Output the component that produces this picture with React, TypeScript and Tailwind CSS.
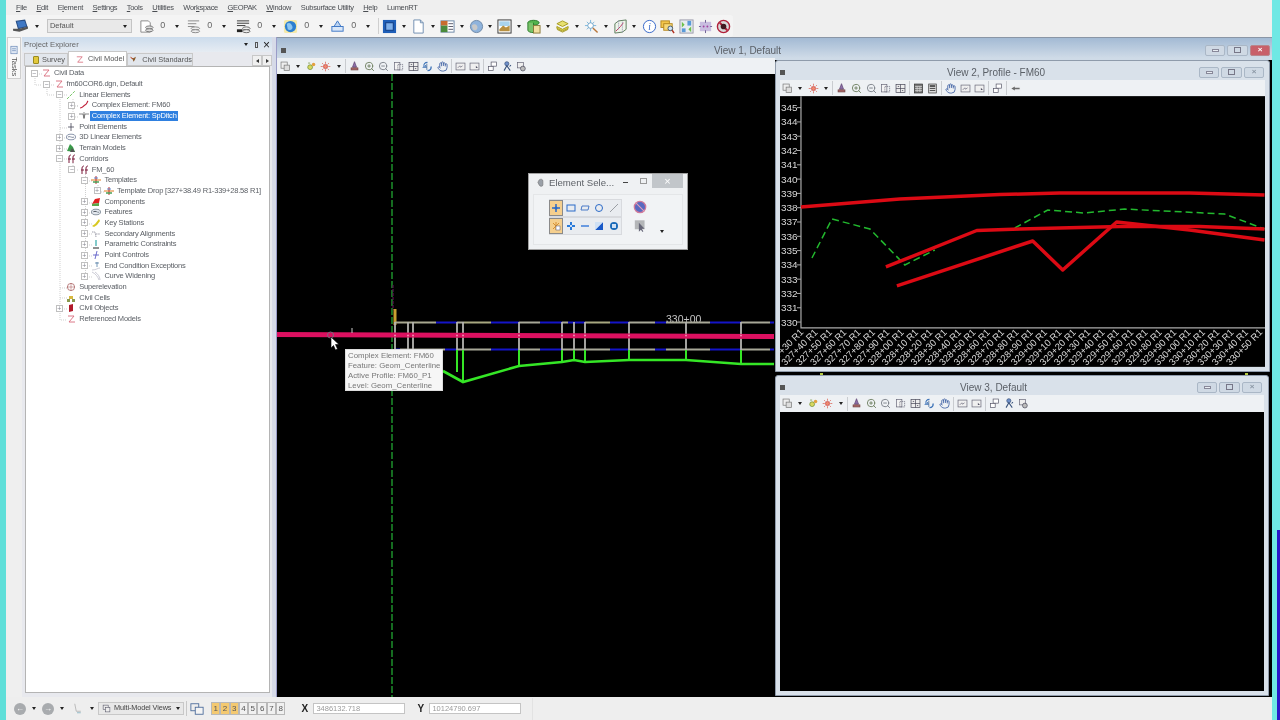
import React from "react";
import { Hand, ZoomIn, ZoomOut } from "lucide-react";

const Caret = () => (
  <span className="block w-0 h-0 border-x-[2.5px] border-x-transparent border-t-[3px] border-t-[#222]" />
);

/* ---------- toolbar icons ---------- */
const S = ({ children, c = "w-[14px] h-[14px]" }: { children: React.ReactNode; c?: string }) => (
  <svg viewBox="0 0 16 16" className={c} fill="none">{children}</svg>
);

const topIcons: Record<string, React.ReactNode> = {
  laptop: (<><path d="M4 3l8-1 2 6-8 2z" fill="#3f78c4" stroke="#2a4f86" /><path d="M1 10l6 0 8-2 0 2-8 3-6-1z" fill="#555" /></>),
  lvl1: (<><path d="M2 2h8l2 2v10H2z" fill="#fff" stroke="#888" /><ellipse cx="11" cy="9" rx="4" ry="1.6" fill="#ddd" stroke="#777" /><ellipse cx="11" cy="12" rx="4" ry="1.6" fill="#ddd" stroke="#777" /></>),
  lvl2: (<><path d="M2 2h12M2 5h9M2 8h7" stroke="#888" /><ellipse cx="10" cy="10" rx="4.5" ry="1.6" fill="#eee" stroke="#888" /><ellipse cx="10" cy="13" rx="4.5" ry="1.6" fill="#eee" stroke="#888" /></>),
  lvl3: (<><path d="M1 2h13M1 4.5h13M1 7h9" stroke="#333" /><rect x="1" y="11" width="6" height="3" fill="#222" /><ellipse cx="11" cy="10" rx="4" ry="1.6" fill="#eee" stroke="#666" /><ellipse cx="11" cy="13" rx="4" ry="1.6" fill="#eee" stroke="#666" /></>),
  globe: (<><rect x="1" y="1" width="14" height="14" rx="2" fill="#f5e9a8" /><circle cx="8" cy="8" r="6" fill="#2c7fd0" /><path d="M4 5c3-2 5 0 6 3s-3 5-5 3" fill="#8fc7ef" /></>),
  tri: (<><path d="M8 2l5 8H3z" fill="#bcd4f2" stroke="#3a74c4" /><rect x="2" y="8" width="12" height="5" fill="#d9e7f8" stroke="#3a74c4" /></>),
  cube: (<><rect x="1" y="1" width="14" height="14" fill="#1f5fb8" /><rect x="4" y="4" width="8" height="8" fill="#7fb0ea" stroke="#0e3a80" /></>),
  doc: (<><path d="M3 1h7l3 3v11H3z" fill="#fff" stroke="#6f8db0" /><path d="M10 1v3h3" stroke="#6f8db0" /></>),
  table: (<><rect x="1" y="2" width="14" height="12" fill="#fff" stroke="#6a86a6" /><rect x="1" y="2" width="7" height="5" fill="#c86b2e" /><rect x="1" y="7" width="7" height="7" fill="#4a8a3c" /><path d="M9 5h5M9 8h5M9 11h5" stroke="#556" /></>),
  earth: (<><circle cx="8" cy="8" r="6.5" fill="#8fb3dc" stroke="#6d87a6" /><path d="M3 7c3-3 6-1 6 2s-3 4-5 2" fill="#c8c8c8" /></>),
  photo: (<><rect x="1" y="1" width="14" height="14" fill="#fff" stroke="#333" /><rect x="2.5" y="2.5" width="11" height="5" fill="#a9d4ee" /><path d="M2.500 11l4-4 3 2 4-2v6h-11z" fill="#b89040" /></>),
  data: (<><ellipse cx="8" cy="4" rx="6" ry="2.600" fill="#53b34c" stroke="#2a7a2a" /><path d="M2 4v8c0 1.500 3 2.500 6 2.500V4" fill="#7ac36a" stroke="#2a7a2a" /><rect x="8" y="7" width="7" height="8" fill="#f2dfa0" stroke="#8a7a3a" /></>),
  stack: (<><path d="M2 5l6-3 6 3-6 3z" fill="#e7e070" stroke="#a59a20" /><path d="M2 8l6 3 6-3v2l-6 3-6-3z" fill="#dcd24c" stroke="#a59a20" /><path d="M2 11l6 3 6-3" stroke="#a59a20" /></>),
  spark: (<><path d="M7 1v12M1 7h12M3 3l8 8M11 3l-8 8" stroke="#7cb6dc" /><circle cx="7" cy="7" r="3" fill="#fff" stroke="#6ca2c8" /><path d="M9.500 9.500l5 5" stroke="#b8763a" strokeWidth="1.500" /></>),
  map: (<><path d="M2 5l4-3 8-1v10l-4 3-8 1z" fill="#eef4ea" stroke="#5a7a5a" /><path d="M3 13l5-5 3-4" stroke="#c03060" /><path d="M6 2v10M10 3v11" stroke="#88a" strokeDasharray="1 1" /></>),
  info: (<><circle cx="8" cy="8" r="6.500" fill="#fff" stroke="#2f62c6" /><text x="8" y="12" textAnchor="middle" fontSize="10" fontStyle="italic" fontFamily="Liberation Serif" fill="#2f62c6">i</text></>),
  find: (<><rect x="1" y="2" width="9" height="7" fill="#f3c64a" stroke="#b4861e" /><rect x="4" y="5" width="9" height="7" fill="#f6d877" stroke="#b4861e" /><circle cx="11" cy="10" r="2.500" fill="#cfe3f5" stroke="#456" /><path d="M13 12l2 3" stroke="#b03020" strokeWidth="1.500" /></>),
  sync: (<><rect x="1" y="1" width="14" height="14" fill="#e8ecf0" stroke="#99a" /><path d="M3 3l3 3-3 3zM13 8l-3 3 3 3z" fill="#6cc04a" /><rect x="9" y="2" width="4" height="5" fill="#5a9ad8" /><rect x="3" y="10" width="4" height="4" fill="#5a9ad8" /></>),
  plug: (<><rect x="2" y="3" width="12" height="10" fill="#c8bde0" /><circle cx="6" cy="8" r="1" fill="#a040a0" /><circle cx="10" cy="8" r="1" fill="#a040a0" /><path d="M8 1v3M8 12v3M1 8h2M13 8h2" stroke="#6a5a90" /></>),
  stop: (<><circle cx="8" cy="8" r="6.500" fill="#d9d9d9" stroke="#b0203a" strokeWidth="1.500" /><path d="M4 4l8 8" stroke="#b0203a" strokeWidth="2" /><circle cx="8" cy="8" r="3" fill="#401820" /></>),
};

const TB = ({ k }: { k: string }) => <S c="w-[15px] h-[15px]">{topIcons[k]}</S>;

const viewIcons: Record<string, React.ReactNode> = {
  copy: (<><rect x="1.500" y="1.500" width="9" height="9" fill="#eee" stroke="#777" /><rect x="6" y="6" width="8" height="8" fill="#ddd" stroke="#777" /></>),
  ball: (<><circle cx="6" cy="9" r="3.500" fill="#d8d860" stroke="#6a8a30" /><circle cx="11" cy="5" r="2.500" fill="#e4a040" /><path d="M3 3h3" stroke="#6a8a30" /></>),
  sun: (<><circle cx="8" cy="8" r="3" fill="#ef8a70" stroke="#c84040" /><path d="M8 1v3M8 12v3M1 8h3M12 8h3M3 3l2 2M11 11l2 2M13 3l-2 2M5 11l-2 2" stroke="#d85848" /></>),
  lamp: (<><path d="M8 1l3 8H5z" fill="#8d6fa8" stroke="#5a4070" /><rect x="3" y="10" width="10" height="3" fill="#b06a6a" stroke="#6a4040" /></>),
  win: (<><rect x="2" y="2" width="8" height="11" fill="#f4f4f4" stroke="#667" /><rect x="7" y="5" width="7" height="8" fill="none" stroke="#667" strokeDasharray="2 1" /></>),
  fit: (<><rect x="1.500" y="2" width="13" height="12" fill="#eee" stroke="#445" /><path d="M8 2v12M1.500 8h13" stroke="#445" /><path d="M4 5h2M10 11h2" stroke="#334" /></>),
  rot: (<><path d="M8 2c-4 0-6 3-5 6l-1 1h4L5 6" stroke="#3f74b8" strokeWidth="1.500" /><path d="M8 14c4 0 6-3 5-6" stroke="#3f74b8" strokeWidth="2" /><path d="M7 4v9" stroke="#2d568c" /></>),
  prev: (<><rect x="1.500" y="3" width="13" height="10" fill="#f0f0f0" stroke="#667" /><path d="M4 10l3-3 1 2 3-2" stroke="#667" /></>),
  next: (<><rect x="1.500" y="3" width="13" height="10" fill="#f0f0f0" stroke="#667" /><path d="M10 10h3l-3-3z" fill="#556" /></>),
  clone: (<><rect x="6" y="1.500" width="8" height="6" fill="#fff" stroke="#556" /><rect x="2" y="8" width="7" height="6" fill="#fff" stroke="#556" /></>),
  man: (<><circle cx="7" cy="4" r="3" fill="#6f8fc8" stroke="#36507a" /><path d="M3 14l4-7 5 7M11 8l2-2" stroke="#36507a" strokeWidth="1.500" /></>),
  cam: (<><rect x="2" y="2" width="9" height="8" fill="#eee" stroke="#667" /><circle cx="10" cy="11" r="3.500" fill="#bbb" stroke="#445" /></>),
  calc: (<><rect x="2" y="1.500" width="12" height="13" fill="#777" stroke="#333" /><path d="M3 5h10M3 8h10M3 11h10M6 5v8M10 5v8" stroke="#ddd" /></>),
  calc2: (<><rect x="2.500" y="1.500" width="11" height="13" fill="#ddd" stroke="#333" /><rect x="4" y="3" width="8" height="3" fill="#555" /><path d="M4 8h8M4 11h8" stroke="#555" strokeWidth="1.500" /></>),
  back: (<><path d="M2 8l5-3v2h7v2H7v2z" fill="#333" /><rect x="1" y="3" width="14" height="10" fill="#eee" opacity="0.300" /></>),
};

const ViewTool = ({ t }: { t: string }) => {
  if (t === "v") return <span className="w-[11px] flex items-center justify-center"><Caret /></span>;
  if (t === "|") return <span className="w-[1px] h-[14px] mx-[1px] bg-[#c9ccd0]" />;
  const box = "w-[14.700px] flex items-center justify-center";
  if (t === "zin") return <span className={box}><ZoomIn className="w-[11px] h-[11px] text-[#6d7f60]" strokeWidth={2} /></span>;
  if (t === "zout") return <span className={box}><ZoomOut className="w-[11px] h-[11px] text-[#7a7f88]" strokeWidth={2} /></span>;
  if (t === "hand") return <span className={box}><Hand className="w-[11px] h-[11px] text-[#4a6aa8]" strokeWidth={2} /></span>;
  return <span className={box}><S c="w-[11px] h-[11px]">{viewIcons[t]}</S></span>;
};

const ViewToolbar = ({ items, cls }: { items: string[]; cls: string }) => (
  <div className={cls}>
    {items.map((t, i) => <ViewTool key={i} t={t} />)}
  </div>
);

const WinBtn = ({ kind, w, red }: { kind: "min" | "max" | "close"; w: string; red?: boolean }) => (
  <span className={`${w} h-[11px] rounded-[2px] border flex items-center justify-center ${red ? "bg-[#c8606a] border-[#b9868c]" : "bg-[#cfd9e4] border-[#aab7c6]"}`}>
    {kind === "min" && <span className="w-[7px] h-[3px] border border-[#889] bg-[#e8edf2]" />}
    {kind === "max" && <span className="w-[7px] h-[6px] border border-[#778]" />}
    {kind === "close" && <span className={`text-[8px] leading-none font-bold ${red ? "text-white" : "text-[#8a96a4]"}`}>×</span>}
  </span>
);

const WinTitle = ({ title, textCls, outer, btnCls, red }: { title: string; textCls: string; outer: string; btnCls: string; red?: boolean }) => (
  <div className={`flex items-center ${outer}`}>
    <span className="w-[5px] h-[5px] bg-[#555] shrink-0" />
    <span className={`text-[10px] text-[#5a5f66] whitespace-nowrap ${textCls}`}>{title}</span>
    <div className={`ml-auto flex items-center gap-[2px] ${btnCls}`}>
      <WinBtn kind="min" w="w-[20px]" />
      <WinBtn kind="max" w="w-[21px]" />
      <WinBtn kind="close" w="w-[20px]" red={red} />
    </div>
  </div>
);

/* ---------- tree ---------- */
const treeIcons: Record<string, React.ReactNode> = {
  z: <path d="M2 2h6L3 8h6" stroke="#d86a7a" strokeWidth="0.900" fill="none" />,
  line: <path d="M1 9L9 1" stroke="#7ac86a" strokeWidth="1" strokeDasharray="3 1" />,
  curve: <path d="M1 8c3 0 3-2 5-3s2-3 3-4" stroke="#c0203a" strokeWidth="1.100" fill="none" />,
  ditch: <path d="M0 3h4l1 4 1-4h4M5 1v7" stroke="#555" strokeWidth="0.700" fill="none" />,
  point: <path d="M5 1v8M2 5h6" stroke="#445" strokeWidth="0.800" />,
  d3: <><ellipse cx="5" cy="5" rx="4.500" ry="2.800" fill="none" stroke="#5a6a8a" strokeWidth="0.700" /><path d="M2 5c2-1 4 1 6 0" stroke="#5a6a8a" strokeWidth="0.600" /></>,
  terrain: <><path d="M1 8l3-7 3 3 2 5z" fill="#3a9a4a" /><path d="M4 9l2-4 3 4z" fill="#555" /></>,
  corr: <path d="M3 9V3c0-2 2-2 2-2M2 5h3M7 9V3c0-2 2-2 2-2M6 5h3" stroke="#7a1a3a" strokeWidth="1" fill="none" />,
  tmpl: <><path d="M0 5h10" stroke="#e07a20" strokeWidth="1" /><path d="M5 1v8" stroke="#c03030" strokeWidth="1" /><path d="M2 7h6" stroke="#3a9a4a" strokeWidth="1.400" /><path d="M3 3h4" stroke="#3a6ac0" strokeWidth="0.800" /></>,
  comp: <><path d="M1 7l3-5 5-1-1 5z" fill="#e02020" /><path d="M1 7l7-1v3H1z" fill="#5aa84a" /></>,
  feat: <><ellipse cx="5" cy="5" rx="4.500" ry="2.800" fill="#e4e8ee" stroke="#5a6a7a" strokeWidth="0.700" /><path d="M2 5c3-2 4 1 6 0" stroke="#5a6a7a" strokeWidth="0.500" /></>,
  key: <path d="M1 8l3-2 4-5 1 2-3 4-3 2z" fill="#d8c820" />,
  sec: <path d="M1 3h3l1 5M5 5h4" stroke="#778" strokeWidth="0.700" strokeDasharray="1.500 0.700" fill="none" />,
  param: <><path d="M5 1v6" stroke="#30a8a8" strokeWidth="1.200" /><path d="M2 9h6" stroke="#222" strokeWidth="1" /></>,
  ptc: <path d="M6 1L4 9M2 5h6" stroke="#4a4ac0" strokeWidth="0.800" />,
  endc: <><path d="M1 9c4 0 6-2 8-2" stroke="#aab" strokeWidth="0.600" fill="none" /><path d="M6 1v5M4 2h4" stroke="#3a6a9a" strokeWidth="0.700" /></>,
  wid: <path d="M1 1c4 2 6 5 7 8M4 1c3 2 5 5 5 8" stroke="#aab" strokeWidth="0.600" fill="none" />,
  sup: <><circle cx="5" cy="5" r="3.600" fill="none" stroke="#a05050" strokeWidth="0.700" /><path d="M1 5h8M5 1v8" stroke="#a05050" strokeWidth="0.500" /></>,
  cell: <><path d="M3 3h4v3H3z" fill="#d8b840" /><path d="M1 6h3v3H1zM6 6h3v3H6z" fill="#8a9a50" /></>,
  obj: <path d="M3 2l4-1v7l-4 1z" fill="#b01a2a" />,
};

type Row = { d: number; icon: string; label: string; exp?: "+" | "-"; sel?: boolean };
const rows: Row[] = [
  { d: 0, icon: "z", label: "Civil Data", exp: "-" },
  { d: 1, icon: "z", label: "fm60COR6.dgn, Default", exp: "-" },
  { d: 2, icon: "line", label: "Linear Elements", exp: "-" },
  { d: 3, icon: "curve", label: "Complex Element: FM60", exp: "+" },
  { d: 3, icon: "ditch", label: "Complex Element: SpDitch", exp: "+", sel: true },
  { d: 2, icon: "point", label: "Point Elements" },
  { d: 2, icon: "d3", label: "3D Linear Elements", exp: "+" },
  { d: 2, icon: "terrain", label: "Terrain Models", exp: "+" },
  { d: 2, icon: "corr", label: "Corridors", exp: "-" },
  { d: 3, icon: "corr", label: "FM_60", exp: "-" },
  { d: 4, icon: "tmpl", label: "Templates", exp: "-" },
  { d: 5, icon: "tmpl", label: "Template Drop [327+38.49 R1-339+28.58 R1]", exp: "+" },
  { d: 4, icon: "comp", label: "Components", exp: "+" },
  { d: 4, icon: "feat", label: "Features", exp: "+" },
  { d: 4, icon: "key", label: "Key Stations", exp: "+" },
  { d: 4, icon: "sec", label: "Secondary Alignments", exp: "+" },
  { d: 4, icon: "param", label: "Parametric Constraints", exp: "+" },
  { d: 4, icon: "ptc", label: "Point Controls", exp: "+" },
  { d: 4, icon: "endc", label: "End Condition Exceptions", exp: "+" },
  { d: 4, icon: "wid", label: "Curve Widening", exp: "+" },
  { d: 2, icon: "sup", label: "Superelevation" },
  { d: 2, icon: "cell", label: "Civil Cells" },
  { d: 2, icon: "obj", label: "Civil Objects", exp: "+" },
  { d: 2, icon: "z", label: "Referenced Models" },
];

const TreeRow = ({ r }: { r: Row }) => (
  <div className="h-[10.700px] flex items-center relative" style={{ paddingLeft: 4.5 + 12.6 * r.d }}>
    <span className={`w-[7px] h-[7px] shrink-0 flex items-center justify-center text-[7px] leading-none text-[#8a8a94] ${r.exp ? "border border-[#c0c0c0] bg-white" : ""}`}>{r.exp === "+" ? "+" : r.exp === "-" ? "−" : ""}</span>
    <svg viewBox="0 0 10 10" className="w-[10px] h-[10px] ml-[3.500px] shrink-0">{treeIcons[r.icon]}</svg>
    <span className={`ml-[1.500px] px-[1.500px] text-[7.500px] leading-[10px] whitespace-nowrap tracking-[-0.200px] ${r.sel ? "bg-[#2f80e0] text-white" : "text-[#5c6066]"}`}>{r.label}</span>
  </div>
);

const TreeLines = () => (
  <svg viewBox="25 66 245 627" className="absolute inset-0 w-[245px] h-[627px] pointer-events-none">
    <g stroke="#bbb" strokeWidth="0.700" strokeDasharray="1 1" fill="none">
      <path d="M34 77V84H41M46 88V94H54M59 98V319H66M72 98V116M72 105H78M72 116H78M59 127H66M72 162V169M84.500 173V276M97 184V191H104" />
      <path d="M38 73H41M50 84H54M63 94H66M63 137H66M63 148H66M63 158H66M76 169H78M76 105H78M88 180H91M88 202H91M88 212H91M88 223H91M88 233H91M88 244H91M88 255H91M88 265H91M88 276H91M63 308H66M59 287H66M59 297H66" />
    </g>
  </svg>
);

/* ---------- main canvas ---------- */
const gray = "#a8a898";
const blue = "#1414c8";
const upper: [number, number, string][] = [
  [395, 436, "#a8a890"], [436, 457, blue], [457, 464, gray], [464, 491, "#a8a880"], [491, 519, blue], [519, 540, gray], [540, 562, blue],
  [562, 568, gray], [568, 585, blue], [585, 610, "#a8a880"], [610, 629, blue], [629, 655, gray], [655, 666, blue], [666, 710, gray], [710, 741, blue], [741, 770, gray], [770, 774, blue],
];
const lower: [number, number, string][] = [
  [395, 400, blue], [400, 445, gray], [445, 457, blue], [457, 491, gray], [491, 519, blue], [519, 540, gray], [540, 562, blue],
  [562, 580, gray], [580, 610, gray], [610, 629, blue], [629, 655, gray], [655, 666, blue], [666, 710, gray], [710, 741, blue], [741, 770, gray], [770, 774, blue],
];
const verts = [395, 408, 413, 457, 463, 519, 562, 574, 585, 629, 686, 741];
const greens: [number, number][] = [[457, 372], [463, 382], [519, 366], [562, 362], [574, 360], [585, 362], [629, 360], [686, 360], [741, 364]];

const Plan = () => (
  <svg viewBox="277 74 497 623" className="w-[497px] h-[623px] block">
    <rect x="277" y="74" width="497" height="623" fill="#000" />
    <path d="M392 74V697" stroke="#1e9a2e" strokeWidth="1.400" strokeDasharray="7 2" />
    <path d="M393 285V310" stroke="#5a1050" strokeWidth="1.200" strokeDasharray="3 1" />
    <path d="M395 309V325" stroke="#c8a030" strokeWidth="3" />
    <text x="666" y="323" fontSize="10.500" fill="#c4c4c4" fontFamily="Liberation Sans">330+00</text>
    {upper.map(([a, b, c], i) => <path key={i} d={`M${a} 322.500H${b}`} stroke={c} strokeWidth="2" />)}
    {lower.map(([a, b, c], i) => <path key={i} d={`M${a} 349.500H${b}`} stroke={c} strokeWidth="2" />)}
    {verts.map((x) => <path key={x} d={`M${x} 322V350`} stroke="#b4b4b0" strokeWidth="1.800" />)}
    {greens.map(([x, y]) => <path key={x} d={`M${x} 350V${y}`} stroke="#35e626" strokeWidth="2" />)}
    <path d="M443 371L463 382L519 366L562 362L574 360L585 362L629 360L686 360L741 364L774 364" stroke="#35e626" strokeWidth="2.600" fill="none" />
    <path d="M277 334.500L774 336.500" stroke="#dc1060" strokeWidth="5" />
    {verts.map((x) => <circle key={x} cx={x} cy={335.500} r="1" fill="#f090b0" />)}
    <path d="M352 328V333" stroke="#ccc" strokeWidth="1" />
    <circle cx="330.500" cy="335" r="3" fill="none" stroke="#7a6a80" strokeWidth="1" />
    <path d="M331 337V348L333.500 345.500L335.500 350L337.500 349L335.500 344.500L339 344.500Z" fill="#fff" stroke="#000" strokeWidth="0.600" />
  </svg>
);

/* ---------- profile ---------- */
const yLabels = Array.from({ length: 16 }, (_, i) => 345 - i);
const xLabels = Array.from({ length: 33 }, (_, i) => {
  const s = 32730 + i * 10;
  const m = s % 100;
  return `${Math.floor(s / 100)}+${m < 10 ? "0" + m : m} R1`;
});

const Profile = () => (
  <svg viewBox="780 96 485.500 271" className="w-[485px] h-[271px] block">
    <rect x="780" y="96" width="486" height="271" fill="#000" />
    <path d="M801 96V328H1266" stroke="#aaa" strokeWidth="1.200" fill="none" />
    {yLabels.map((v, i) => {
      const y = 107.500 + i * 14.310;
      return (
        <g key={v}>
          <text x="781" y={y + 3.500} fontSize="10" fill="#d8d8d8" fontFamily="Liberation Sans">{v}</text>
          <path d={`M797 ${y}H801`} stroke="#aaa" />
        </g>
      );
    })}
    {xLabels.map((t, i) => {
      const x = 804 + i * 14.360;
      return (
        <text key={t} x={x} y={333} transform={`rotate(-45 ${x} 333)`} textAnchor="end" fontSize="9.500" fill="#d8d8d8" fontFamily="Liberation Sans">{t}</text>
      );
    })}
    <path d="M812 258L832 219L870 229L905 265L935 250M1015 228L1048 210L1085 213L1125 209L1225 214L1265 229" stroke="#22b82e" strokeWidth="1.500" strokeDasharray="7 4" fill="none" />
    <g stroke="#dc0a14" strokeWidth="3.500" fill="none" strokeLinejoin="round">
      <path d="M801 207L900 199L1000 194.500L1060 193L1190 193L1265 195" />
      <path d="M886 267L977 230.500L1020 229L1120 226.500L1200 226.500L1265 229" />
      <path d="M897 286L1033 241L1063 270L1117 222L1190 230L1265 240" />
    </g>
  </svg>
);

/* ---------- top chrome data ---------- */
const menu: [string, string, string][] = [
  ["", "F", "ile"], ["", "E", "dit"], ["E", "l", "ement"], ["", "S", "ettings"], ["", "T", "ools"], ["", "U", "tilities"],
  ["Wor", "k", "space"], ["", "G", "EOPAK"], ["", "W", "indow"], ["Subsurface Utility", "", ""], ["", "H", "elp"], ["LumenRT", "", ""],
];

const ZeroGroup = ({ k }: { k: string }) => (
  <div className="w-[47px] flex items-center">
    <span className="w-[18px] flex justify-center"><TB k={k} /></span>
    <span className="w-[14px] text-center text-[9px] text-[#666]">0</span>
    <span className="w-[15px] flex justify-center"><Caret /></span>
  </div>
);
const Pair = ({ k }: { k: string }) => (
  <div className="w-[28.800px] flex items-center">
    <span className="w-[18px] flex justify-center"><TB k={k} /></span>
    <span className="w-[10.800px] flex justify-center"><Caret /></span>
  </div>
);
const Single = ({ k }: { k: string }) => (
  <span className="w-[18.700px] flex justify-center"><TB k={k} /></span>
);

const SelTool = ({ children, on }: { children: React.ReactNode; on?: boolean }) => (
  <span className={`w-[14.400px] h-[16px] flex items-center justify-center ${on ? "bg-[#f5cf8e] border border-[#8a8a8a]" : ""}`}>
    <svg viewBox="0 0 10 10" className="w-[10px] h-[10px]" fill="none">{children}</svg>
  </span>
);

export default function App() {
  return (
    <div className="w-[1280px] h-[720px] flex overflow-hidden bg-[#efefef] font-['Liberation_Sans',sans-serif] blur-[0.400px]">
      <div className="w-[6px] shrink-0 bg-[#5fdfd9]" />

      <div className="w-[1266px] shrink-0 flex flex-col">
        {/* menu */}
        <div className="h-[15px] flex items-center pl-[10px] gap-[9.500px] text-[7.500px] tracking-[-0.300px] text-[#4a4d52] bg-[#efefef]">
          {menu.map(([a, u, b], i) => (
            <span key={i} className="whitespace-nowrap">{a}{u && <u className="decoration-[0.500px] underline-offset-1">{u}</u>}{b}</span>
          ))}
        </div>

        {/* toolbar */}
        <div className="h-[22px] w-[727px] flex items-center pl-[6px] bg-[#f4f4f4] rounded-r-[3px]">
          <span className="w-[18px] flex justify-center"><S c="w-[17px] h-[17px]">{topIcons.laptop}</S></span>
          <span className="w-[14px] flex justify-center"><Caret /></span>
          <div className="ml-[3px] w-[85px] h-[14px] flex items-center justify-between px-[1px] pr-[4px] bg-[#e9e9e9] border border-[#c4c4c4]">
            <span className="text-[7.500px] text-[#555] pl-[1px]">Default</span>
            <Caret />
          </div>
          <div className="w-[6px]" />
          <ZeroGroup k="lvl1" />
          <ZeroGroup k="lvl2" />
          <div className="w-[3px]" />
          <ZeroGroup k="lvl3" />
          <ZeroGroup k="globe" />
          <ZeroGroup k="tri" />
          <span className="w-[1px] h-[16px] ml-[2px] mr-[2px] bg-[#cfcfcf]" />
          <Pair k="cube" />
          <Pair k="doc" />
          <Pair k="table" />
          <Pair k="earth" />
          <Pair k="photo" />
          <Pair k="data" />
          <Pair k="stack" />
          <Pair k="spark" />
          <Pair k="map" />
          <Single k="info" />
          <Single k="find" />
          <Single k="sync" />
          <Single k="plug" />
          <Single k="stop" />
        </div>

        {/* workspace */}
        <div className="h-[660px] flex">
          {/* tasks */}
          <div className="w-[16px] shrink-0 pl-[1px]">
            <div className="w-[14px] h-[42px] bg-[#f8f8f8] border border-[#cfcfcf] flex flex-col items-center pt-[7px] gap-[2px]">
              <S c="w-[10px] h-[10px]"><rect x="3" y="2" width="10" height="12" fill="#dfe8f4" stroke="#5f7fb0" /><path d="M5 6h6M5 9h6" stroke="#5f7fb0" /></S>
              <span className="text-[7.500px] leading-[12px] text-[#555] [writing-mode:vertical-rl]">Tasks</span>
            </div>
          </div>

          {/* project explorer */}
          <div className="w-[250px] shrink-0 flex flex-col bg-[#e8e9ee]">
            <div className="h-[15px] flex items-center pl-[2px] pr-[2px] bg-gradient-to-b from-[#ccdcec] to-[#e6ecf3]">
              <span className="text-[7.700px] text-[#666]">Project Explorer</span>
              <div className="ml-auto flex items-center">
                <Caret />
                <span className="w-[3px] h-[6px] border border-[#555] ml-[7px]" />
                <span className="ml-[5px] text-[12px] leading-none text-[#222]">×</span>
              </div>
            </div>
            <div className="h-[14px] flex items-end pl-[2px] pr-[0px] relative">
              <div className="w-[44px] h-[13px] flex items-center gap-[3px] pl-[8px] bg-[#e2e6ec] border border-[#c8c8c8]">
                <span className="w-[6px] h-[8px] bg-[#e2c93c] rounded-[1px] border border-[#9a8a20]" />
                <span className="text-[7.400px] text-[#555]">Survey</span>
              </div>
              <div className="w-[59px] h-[15px] flex items-center gap-[4px] pl-[6px] bg-white border border-[#c8c8c8] border-b-0">
                <svg viewBox="0 0 10 10" className="w-[9px] h-[9px]">{treeIcons.z}</svg>
                <span className="text-[7.400px] text-[#555] whitespace-nowrap">Civil Model</span>
              </div>
              <div className="w-[66px] h-[13px] flex items-center gap-[5px] pl-[2px] bg-[#e2e6ec] border border-[#c8c8c8]">
                <S c="w-[9px] h-[9px]"><path d="M2 4l5 1 6-3-2 6-3 5-2-5z" fill="#8a5a2a" /><path d="M1 3l5 3" stroke="#c04020" strokeWidth="2" /></S>
                <span className="text-[7.400px] text-[#555] whitespace-nowrap">Civil Standards</span>
              </div>
              <div className="ml-auto flex">
                <span className="w-[10px] h-[11px] bg-[#f0f0f0] border border-[#c8c8c8] flex items-center justify-center"><span className="w-0 h-0 border-y-[2px] border-y-transparent border-r-[3px] border-r-[#333]" /></span>
                <span className="w-[10px] h-[11px] bg-[#f0f0f0] border border-[#c8c8c8] flex items-center justify-center"><span className="w-0 h-0 border-y-[2px] border-y-transparent border-l-[3px] border-l-[#333]" /></span>
              </div>
            </div>
            <div className="ml-[3px] mr-[2px] h-[627px] bg-white border border-[#b4b4b4] relative">
              <TreeLines />
              <div className="pt-[1px] relative">
                {rows.map((r) => <TreeRow key={r.label + r.d} r={r} />)}
              </div>
            </div>
          </div>

          <div className="w-[5px] shrink-0 bg-[#d6dae8] border-r border-r-[#9a9cc8]" />

          {/* views */}
          <div className="w-[995px] shrink-0 flex flex-col">
            <WinTitle
              title="View 1, Default"
              outer="h-[21px] pt-[4px] pl-[4px] pr-[2px] border-t border-t-[#8a96a6] bg-gradient-to-b from-[#a3bad4] to-[#cfdbe7]"
              textCls="ml-[428px]"
              btnCls=""
              red
            />
            <div className="h-[639px] flex">
              <div className="w-[498px] shrink-0 flex flex-col bg-black">
                <ViewToolbar
                  cls="h-[16px] flex items-center pl-[1px] bg-[#eef1f4]"
                  items={["copy", "v", "ball", "sun", "v", "|", "lamp", "zin", "zout", "win", "fit", "rot", "hand", "|", "prev", "next", "|", "clone", "man", "cam"]}
                />
                <div className="relative w-[497px] h-[623px]">
                  <Plan />
                  {/* tooltip */}
                  <div className="absolute left-[68px] top-[275px] w-[98px] h-[42px] bg-[#f6f6f6] border border-[#ddd] pl-[2px] pt-[1px] text-[7.800px] leading-[10px] text-[#777] whitespace-nowrap">
                    <div>Complex Element: FM60</div>
                    <div>Feature: Geom_Centerline</div>
                    <div>Active Profile: FM60_P1</div>
                    <div>Level: Geom_Centerline</div>
                  </div>
                  {/* element selection */}
                  <div className="absolute left-[251px] top-[99px] w-[160px] h-[77px] bg-[#eff1f3] border border-[#a0a0a0] flex flex-col">
                    <div className="h-[19px] flex items-start pl-[7px] shrink-0">
                      <S c="w-[10px] h-[12px] mt-[3px]"><path d="M5 3c3-2 6-1 6 2v6c0 3-5 3-6 0L3 7z" fill="#9aa0a8" stroke="#777" /></S>
                      <span className="ml-[3px] mt-[2px] w-[62px] text-[9.600px] leading-[13px] text-[#5e6268] whitespace-nowrap">Element Sele...</span>
                      <span className="ml-[12px] mt-[8px] w-[5px] h-[1px] bg-[#444]" />
                      <span className="ml-[12px] mt-[4px] w-[7px] h-[6px] border border-[#999]" />
                      <span className="ml-[5px] w-[31px] h-[14px] bg-[#c2c6ca] flex items-center justify-center text-[11px] leading-none text-white">×</span>
                    </div>
                    <div className="mx-[4px] mb-[4px] mt-[1px] flex-1 bg-[#f1f3f5] border border-[#e4e6e8] pl-[15px] pt-[4px] flex">
                      <div className="flex flex-col">
                        <div className="flex w-[73px] bg-[#e9ecf0] border-y border-r border-[#d8dade]">
                          <SelTool on><path d="M5 1v8M1 5h8" stroke="#2a6ac8" strokeWidth="1.500" /><circle cx="5" cy="5" r="1.500" fill="#2a6ac8" /></SelTool>
                          <SelTool><rect x="1" y="2" width="8" height="6" stroke="#2a6ac8" /></SelTool>
                          <SelTool><path d="M2 3h7L8 7H1z" stroke="#4a7ac8" /></SelTool>
                          <SelTool><circle cx="5" cy="5" r="3.500" stroke="#2a6ac8" /></SelTool>
                          <SelTool><path d="M1 9l8-8" stroke="#9a9ea4" /></SelTool>
                        </div>
                        <div className="flex w-[73px] bg-[#e9ecf0] border-y border-r border-[#d8dade]">
                          <SelTool on><path d="M2 2l6 6M8 2l-6 6M5 1v8" stroke="#d89030" /><rect x="5" y="5" width="4" height="4" fill="#fff" stroke="#557" strokeWidth="0.500" /></SelTool>
                          <SelTool><path d="M5 1v8M1 5h8" stroke="#2a7ad8" strokeWidth="2" /><circle cx="5" cy="5" r="1" fill="#fff" /></SelTool>
                          <SelTool><rect x="1" y="4" width="8" height="2" fill="#6a9ae0" /></SelTool>
                          <SelTool><path d="M1 9L9 1v8z" fill="#1a5ac8" /><path d="M1 1h8L1 9z" fill="#cfe0f4" /></SelTool>
                          <SelTool><circle cx="5" cy="5" r="4" fill="#1a6ab8" /><path d="M3 3h4v4H3z" fill="#cfe0f4" /></SelTool>
                        </div>
                      </div>
                      <div className="ml-[11px] flex flex-col items-center pt-[1px] gap-[5px]">
                        <S c="w-[14px] h-[14px]"><circle cx="8" cy="8" r="6.500" fill="#5a6ac0" stroke="#d07a9a" strokeWidth="1.500" /><path d="M3 3l10 10" stroke="#e4a0b8" strokeWidth="1.200" /></S>
                        <S c="w-[13px] h-[14px]"><rect x="1" y="1" width="12" height="11" fill="#b4b6b8" /><path d="M6 4v11l2.500-2.500 2 3 1-1-2-3H13z" fill="#667" /></S>
                      </div>
                      <div className="ml-[13px] mt-[31px]"><Caret /></div>
                    </div>
                  </div>
                </div>
              </div>

              <div className="w-[497px] shrink-0 flex flex-col bg-black">
                <div className="h-[2px] bg-[#cfdbe7]" />
                {/* view 2 */}
                <div className="w-[495px] h-[312px] flex flex-col rounded-t-[3px] border border-[#8f9bab] bg-[#d9e1ea] px-[4px] pb-[4px]">
                  <WinTitle title="View 2, Profile - FM60" outer="h-[19px] pt-[3px] shrink-0" textCls="ml-[162px]" btnCls="mr-[1px]" />
                  <ViewToolbar
                    cls="h-[16px] shrink-0 flex items-center bg-[#eef1f4]"
                    items={["copy", "v", "sun", "v", "|", "lamp", "zin", "zout", "win", "fit", "|", "calc", "calc2", "|", "hand", "prev", "next", "|", "clone", "|", "back"]}
                  />
                  <Profile />
                </div>
                <div className="h-[3px] flex items-center justify-between pl-[45px] pr-[22px] w-[495px]">
                  <span className="w-[3px] h-[2px] bg-[#b4c83c]" />
                  <span className="w-[3px] h-[2px] bg-[#b4c83c]" />
                </div>
                {/* view 3 */}
                <div className="w-[494px] h-[321px] flex flex-col rounded-t-[3px] border border-[#8f9bab] bg-[#d9e1ea] px-[4px] pb-[4px]">
                  <WinTitle title="View 3, Default" outer="h-[19px] pt-[3px] shrink-0" textCls="ml-[175px]" btnCls="mr-[2px]" />
                  <ViewToolbar
                    cls="h-[17px] shrink-0 flex items-center bg-[#eef1f4]"
                    items={["copy", "v", "ball", "sun", "v", "|", "lamp", "zin", "zout", "win", "fit", "rot", "hand", "|", "prev", "next", "|", "clone", "man", "cam"]}
                  />
                  <div className="flex-1 bg-black" />
                </div>
              </div>
            </div>
          </div>
        </div>

        {/* status bar */}
        <div className="h-[23px] flex items-center pl-[8px] bg-[#eeeeee]">
          <span className="w-[12px] h-[12px] rounded-full bg-[#a8abae] flex items-center justify-center text-[8px] leading-none text-white">←</span>
          <span className="w-[16px] flex justify-center"><Caret /></span>
          <span className="w-[12px] h-[12px] rounded-full bg-[#a8abae] flex items-center justify-center text-[8px] leading-none text-white">→</span>
          <span className="w-[16px] flex justify-center"><Caret /></span>
          <span className="ml-[1px] flex"><S c="w-[12px] h-[12px]"><path d="M5 1l2 10h6" stroke="#aaa" /><path d="M8 13h5" stroke="#7ab" /></S></span>
          <span className="ml-[2px] w-[13px] flex justify-center"><Caret /></span>
          <div className="w-[86px] h-[13px] flex items-center pl-[3px] border border-[#c8c8c8] bg-[#e8e8e8]">
            <S c="w-[9px] h-[9px]"><rect x="2" y="2" width="9" height="8" stroke="#556" /><rect x="6" y="6" width="8" height="8" stroke="#556" fill="#eee" /></S>
            <span className="ml-[3px] text-[7.300px] tracking-[-0.100px] text-[#444] whitespace-nowrap">Multi-Model Views</span>
            <span className="ml-auto pr-[3px] flex"><Caret /></span>
          </div>
          <span className="w-[1px] h-[15px] ml-[2px] bg-[#c8c8c8]" />
          <span className="ml-[3px] w-[14px] flex justify-center"><S c="w-[14px] h-[14px]"><rect x="1" y="2" width="9" height="8" fill="#eee" stroke="#4a6a9a" /><rect x="6" y="6" width="9" height="8" fill="#f4f4f4" stroke="#4a6a9a" /></S></span>
          <div className="ml-[7px] flex">
            {[1, 2, 3, 4, 5, 6, 7, 8].map((n) => (
              <span key={n} className={`w-[9.300px] h-[13px] flex items-center justify-center text-[8px] text-[#555] border border-[#b8b8b8] ${n < 4 ? "bg-[#f4c970]" : "bg-[#f0f0f0]"}`}>{n}</span>
            ))}
          </div>
          <span className="ml-[16px] w-[8px] text-[10px] font-bold text-[#222]">X</span>
          <span className="ml-[4px] w-[92px] h-[11px] flex items-center pl-[2px] text-[7.500px] text-[#9a9a9a] bg-white border border-[#c4c4c4]">3486132.718</span>
          <span className="ml-[12px] w-[8px] text-[10px] font-bold text-[#222]">Y</span>
          <span className="ml-[4px] w-[92px] h-[11px] flex items-center pl-[2px] text-[7.500px] text-[#9a9a9a] bg-white border border-[#c4c4c4]">10124790.697</span>
          <span className="ml-[11px] w-[1px] h-[22px] bg-[#e2e2e2]" />
        </div>
      </div>

      <div className="w-[5px] shrink-0 bg-[#6fe8e4]" />
      <div className="w-[3px] shrink-0 flex flex-col">
        <div className="h-[530px] bg-[#6fe8e4]" />
        <div className="flex-1 bg-[#2a18c8]" />
      </div>
    </div>
  );
}
